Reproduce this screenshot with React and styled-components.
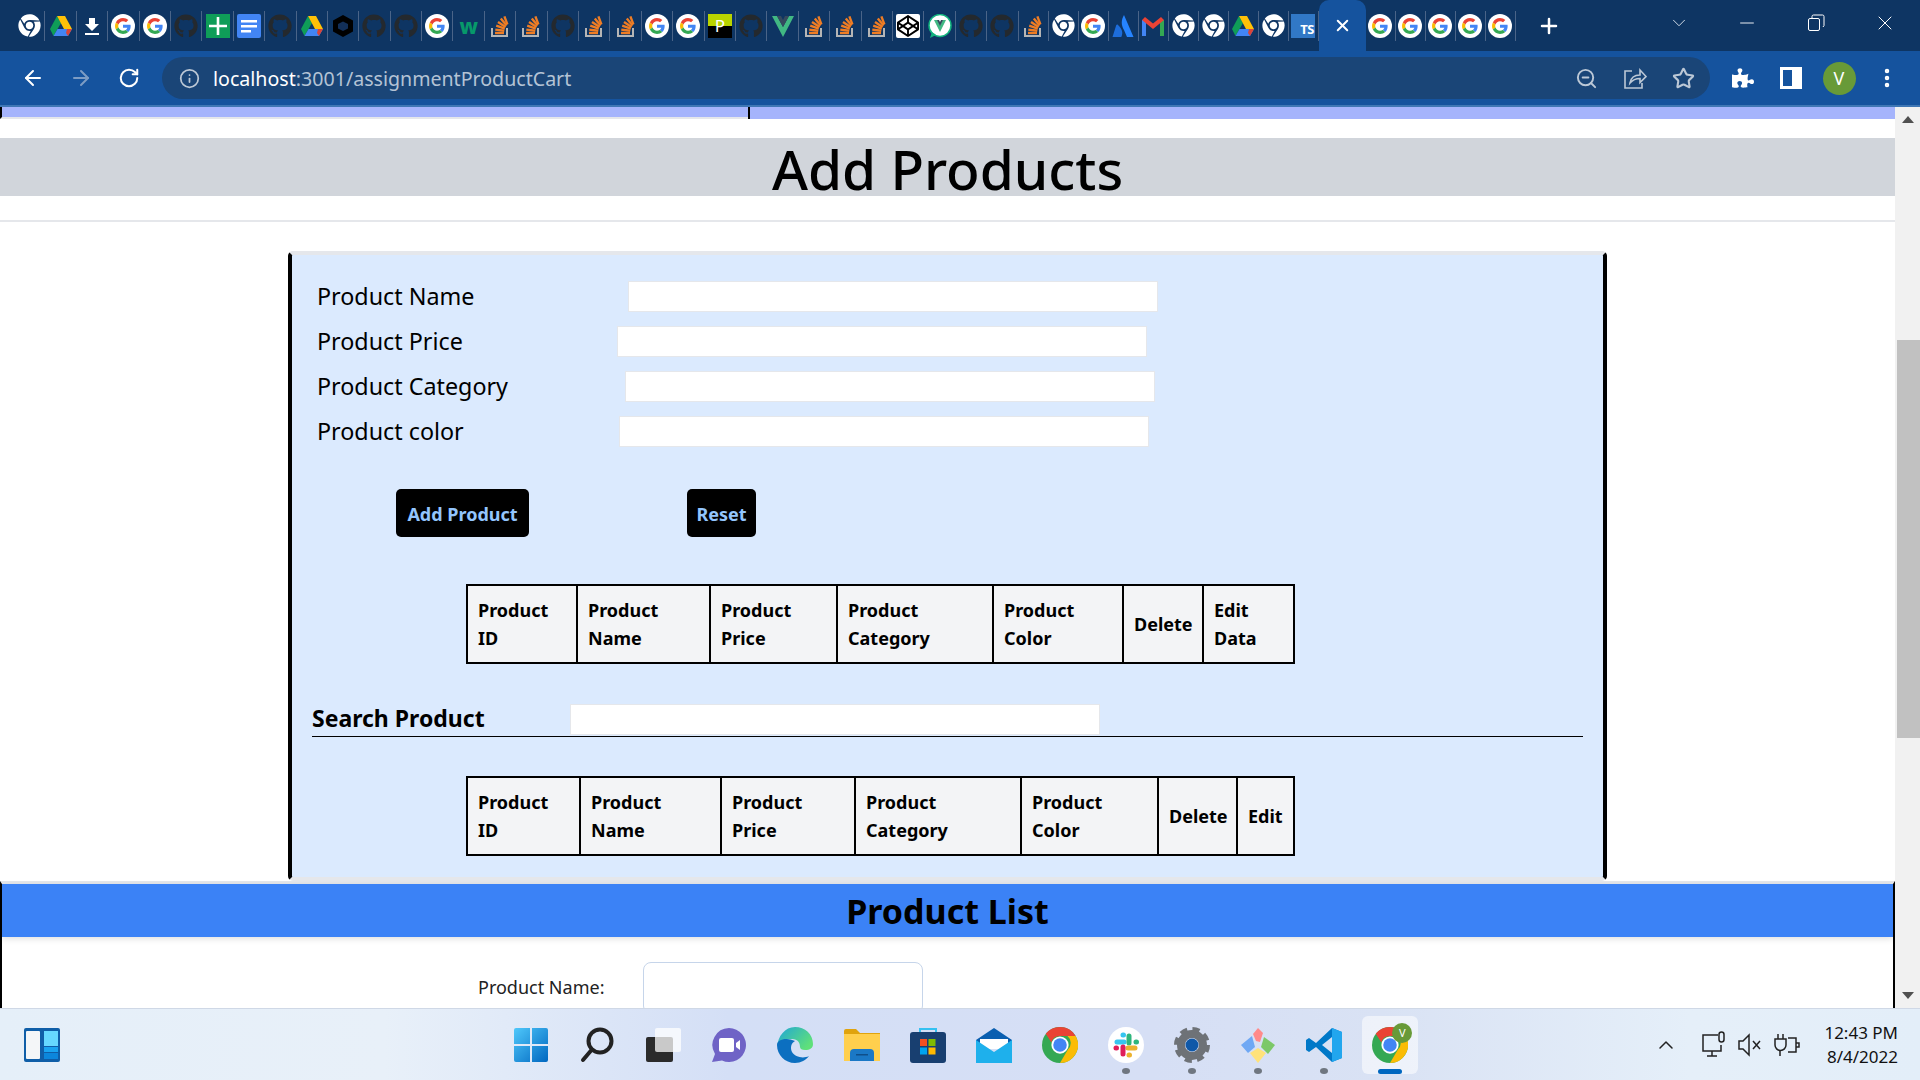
import React from 'react'
import styled, { createGlobalStyle } from 'styled-components'
import { ArrowLeft, ArrowRight, RotateCw, Info, ZoomOut, Star, MoreVertical, Plus, X, ChevronDown, Minus, ChevronUp } from 'lucide-react'
import { FaChrome, FaGithub, FaCodepen, FaPuzzlePiece } from 'react-icons/fa'

const GlobalStyle = createGlobalStyle`
    html, body {
        margin: 0;
        padding: 0;
        overflow: hidden;
    }
    * {
        box-sizing: border-box;
    }
    body {
        font-family: "Noto Sans", "Open Sans", sans-serif;
    }
`

const Screen = styled.div`
    width: 1920px;
    height: 1080px;
    display: flex;
    flex-direction: column;
    overflow: hidden;
    background: #fff;
`

const TabStrip = styled.div`
    height: 51px;
    background: #0e3563;
    display: flex;
    align-items: flex-start;
    padding-left: 14px;
    flex-shrink: 0;
`

const TabGroup = styled.div`
    display: flex;
    height: 51px;
    align-items: center;
`

const MiniTab = styled.div`
    width: ${(p) => p.$width}px;
    height: 30px;
    display: flex;
    align-items: center;
    justify-content: center;
    border-right: 1px solid #4a6488;
`

const ActiveTab = styled.div`
    width: 47px;
    height: 51px;
    background: #15539e;
    border-radius: 10px 10px 0 0;
    display: flex;
    align-items: center;
    justify-content: center;
`

const NewTab = styled.div`
    width: 24px;
    margin-left: 21px;
    height: 51px;
    display: flex;
    align-items: center;
    justify-content: center;
`

const WindowControls = styled.div`
    margin-left: auto;
    height: 46px;
    padding-right: 1px;
    display: flex;
    align-items: center;
`

const ControlSlot = styled.div`
    width: 68.7px;
    display: flex;
    justify-content: center;
`

const Toolbar = styled.div`
    height: 54px;
    background: #15539e;
    display: flex;
    align-items: center;
    padding-left: 9px;
    flex-shrink: 0;
`

const ToolbarEdge = styled.div`
    height: 2px;
    background: #3f77b5;
    flex-shrink: 0;
`

const NavButton = styled.div`
    width: 48px;
    display: flex;
    justify-content: center;
`

const Omnibox = styled.div`
    margin-left: 9px;
    width: 1548px;
    height: 42px;
    border-radius: 21px;
    background: #1a4577;
    display: flex;
    align-items: center;
    padding: 0 15px 0 17px;
`

const UrlText = styled.div`
    margin-left: 13px;
    color: #b4c3d5;
    font-size: 19.6px;
    white-space: nowrap;
`

const UrlHost = styled.span`
    color: #fff;
`

const OmniActions = styled.div`
    margin-left: auto;
    width: 120px;
    display: flex;
    align-items: center;
    justify-content: space-between;
`

const ToolbarRight = styled.div`
    margin-left: 9px;
    display: flex;
    align-items: center;
`

const Avatar = styled.div`
    width: 33px;
    height: 33px;
    border-radius: 50%;
    background: #689a38;
    color: #fff;
    font-size: 18px;
    display: flex;
    align-items: center;
    justify-content: center;
`

const Viewport = styled.div`
    flex: 1;
    min-height: 0;
    display: flex;
    overflow: hidden;
`

const Page = styled.div`
    width: 1895px;
    overflow: hidden;
    background: #fff;
`

const TopStrip = styled.div`
    display: flex;
    height: 12px;
`

const StripLeft = styled.div`
    width: 748px;
    height: 12px;
    background: #a5b4fc;
    border-left: 2px solid #000;
    border-bottom: 2px solid #e5e7eb;
`

const StripRight = styled.div`
    flex: 1;
    background: #a5b4fc;
    border-left: 2px solid #000;
`

const PageTitle = styled.h1`
    margin: 19px 0 0;
    height: 58px;
    background: #d1d5db;
    color: #000;
    text-align: center;
    font-size: 55px;
    font-weight: 500;
    line-height: 62px;
`

const Divider = styled.div`
    margin-top: 24px;
    height: 2px;
    background: #e5e7eb;
`

const Panel = styled.div`
    margin: 29px 0 0 288px;
    width: 1319px;
    height: 630px;
    background: #dbeafe;
    border-style: solid;
    border-width: 4px;
    border-color: #e5e7eb #000;
    border-radius: 5px;
    padding-top: 26px;
`

const FormRow = styled.div`
    display: flex;
    align-items: center;
    height: 31px;
    margin: 0 0 14px 25px;
`

const FormLabel = styled.label`
    width: ${(p) => p.$width}px;
    padding-bottom: 2px;
    font-size: 23.3px;
    color: #000;
    white-space: nowrap;
`

const TextInput = styled.input`
    width: 530px;
    height: 31px;
    background: #fff;
    border: 1px solid #e5e7eb;
    border-radius: 0;
    padding: 0;
    outline: none;
`

const ButtonRow = styled.div`
    display: flex;
    gap: 158px;
    margin: 42px 0 0 104px;
`

const ActionButton = styled.button`
    width: ${(p) => p.$width}px;
    height: 48px;
    background: #000;
    color: #93c5fd;
    border: none;
    border-radius: 5px;
    padding: 2px 0 0;
    font-family: inherit;
    font-size: 18px;
    font-weight: 700;
`

const TableWrap = styled.div`
    margin: ${(p) => p.$top}px 0 0 174px;
`

const DataTable = styled.table`
    width: 827px;
    height: 80px;
    table-layout: fixed;
    border-collapse: collapse;
    border: 2px solid #000;
`

const HeadCell = styled.th`
    background: #f3f4f6;
    border: 2px solid #000;
    padding: 0 0 0 10px;
    text-align: left;
    font-size: 18px;
    font-weight: 700;
    line-height: 28px;
    color: #000;
`

const CellLine = styled.div`
    white-space: nowrap;
`

const SearchRow = styled.div`
    display: flex;
    align-items: center;
    width: 1271px;
    height: 33px;
    margin: 40px 0 0 20px;
    padding-bottom: 2px;
    border-bottom: 1px solid #000;
`

const SearchLabel = styled.div`
    width: 258px;
    padding-bottom: 2px;
    font-size: 23px;
    font-weight: 700;
    color: #000;
`

const ListSection = styled.div`
    border-style: solid;
    border-width: 3px 2px 0;
    border-color: #e5e7eb #000;
    height: 140px;
`

const ListTitle = styled.h2`
    margin: 0;
    height: 53px;
    background: #3b82f6;
    color: #000;
    font-size: 34px;
    font-weight: 700;
    line-height: 54px;
    text-align: center;
    box-shadow: 0 2px 6px rgba(0, 0, 0, 0.12);
`

const ListRow = styled.div`
    display: flex;
    align-items: center;
    margin: 25px 0 0 476px;
`

const ListLabel = styled.label`
    width: 165px;
    padding-bottom: 3px;
    font-size: 18px;
    color: #222;
`

const ListInput = styled.input`
    width: 280px;
    height: 52px;
    background: #fff;
    border: 1px solid #c6d5ea;
    border-radius: 8px;
    outline: none;
`

const Scrollbar = styled.div`
    width: 25px;
    background: #f1f1f1;
    display: flex;
    flex-direction: column;
    align-items: flex-end;
`

const ScrollArrow = styled.div`
    width: 25px;
    height: 25px;
    flex-shrink: 0;
    margin-top: ${(p) => (p.$up ? '0' : 'auto')};
    display: flex;
    align-items: center;
    justify-content: center;

    &:before {
        content: "";
        border-left: 6px solid transparent;
        border-right: 6px solid transparent;
        border-bottom: ${(p) => (p.$up ? '7px solid #505050' : '0')};
        border-top: ${(p) => (p.$up ? '0' : '7px solid #505050')};
    }
`

const ScrollThumb = styled.div`
    width: 23px;
    height: 398px;
    margin-top: 208px;
    background: #c1c1c1;
`

const Taskbar = styled.div`
    height: 72px;
    flex-shrink: 0;
    display: flex;
    align-items: center;
    background: linear-gradient(90deg, #e5eff9 0%, #e8f0f9 20%, #d4dff6 38%, #d6dff5 60%, #d9e2f4 72%, #e5eff9 88%, #e3eef9 100%);
    border-top: 1px solid #cfd8e6;
`

const WidgetButton = styled.div`
    width: 36px;
    height: 34px;
    margin-left: 24px;
`

const AppGroup = styled.div`
    display: flex;
    align-items: center;
    margin-left: 438px;
`

const AppSlot = styled.div`
    position: relative;
    width: 66.1px;
    height: 58px;
    display: flex;
    align-items: center;
    justify-content: center;
    ${(p) => p.$active && `
        background: rgba(255, 255, 255, 0.55);
        border-radius: 6px;
        width: 56px;
        margin-left: 5px;
    `}
`

const OpenDot = styled.span`
    position: absolute;
    left: 50%;
    bottom: 0;
    width: 8px;
    height: 6px;
    margin-left: -4px;
    border-radius: 50%;
    background: #6f7680;
`

const ActiveBar = styled.span`
    position: absolute;
    left: 16px;
    bottom: 0;
    width: 24px;
    height: 5px;
    border-radius: 3px;
    background: #0067c0;
`

const ChromeBadgeWrap = styled.span`
    position: relative;
    display: block;
    width: 36px;
    height: 36px;
`

const ChromeBadge = styled.span`
    position: absolute;
    top: -4px;
    right: -4px;
    width: 20px;
    height: 20px;
    border-radius: 50%;
    background: #689a38;
    color: #fff;
    font-size: 11px;
    display: flex;
    align-items: center;
    justify-content: center;
`

const Tray = styled.div`
    margin-left: auto;
    display: flex;
    align-items: center;
    padding-right: 22px;
    color: #111;
`

const TraySlot = styled.div`
    width: ${(p) => p.$width}px;
    display: flex;
    justify-content: center;
`

const Clock = styled.div`
    margin-left: 20px;
    display: flex;
    flex-direction: column;
    align-items: flex-end;
    font-size: 17px;
    line-height: 24px;
    color: #111;
`

const TabIcon = styled.span`
    display: flex;
    align-items: center;
    justify-content: center;
    width: 24px;
    height: 24px;
    flex-shrink: 0;
`

const TsIcon = styled(TabIcon)`
    background: #3178c6;
    color: #fff;
    font: 700 13px "Noto Sans", sans-serif;
    align-items: flex-end;
    justify-content: flex-end;
    letter-spacing: -0.5px;
    padding-right: 1px;
`

const PrezIcon = styled(TabIcon)`
    background: linear-gradient(#b9d300 48%, #000 48%);
    color: #fff;
    font: 400 17px "Noto Sans", sans-serif;
`

const W3Icon = styled(TabIcon)`
    color: #07996a;
    font: 800 21px "Noto Sans", sans-serif;
    line-height: 24px;
`

const CodepenIcon = styled(TabIcon)`
    background: #fff;
    border-radius: 2px;
`

const GoogleG = () => (
    <svg width="24" height="24" viewBox="0 0 24 24">
        <circle cx="12" cy="12" r="12" fill="#fff" />
        <g transform="translate(4 4) scale(0.333)">
            <path fill="#EA4335" d="M24 9.5c3.54 0 6.71 1.22 9.21 3.6l6.85-6.85C35.9 2.38 30.47 0 24 0 14.62 0 6.51 5.38 2.56 13.22l7.98 6.19C12.43 13.72 17.74 9.5 24 9.5z" />
            <path fill="#4285F4" d="M46.98 24.55c0-1.57-.15-3.09-.38-4.55H24v9.02h12.94c-.58 2.96-2.26 5.48-4.78 7.18l7.73 6c4.51-4.18 7.09-10.36 7.09-17.65z" />
            <path fill="#FBBC05" d="M10.53 28.59c-.48-1.45-.76-2.99-.76-4.59s.27-3.14.76-4.59l-7.98-6.19C.92 16.46 0 20.12 0 24c0 3.88.92 7.54 2.56 10.78l7.97-6.19z" />
            <path fill="#34A853" d="M24 48c6.48 0 11.93-2.13 15.89-5.81l-7.73-6c-2.15 1.45-4.92 2.3-8.16 2.3-6.26 0-11.57-4.22-13.47-9.91l-7.98 6.19C6.51 42.62 14.62 48 24 48z" />
        </g>
    </svg>
)

const DriveIcon = () => (
    <svg width="24" height="22" viewBox="0 0 24 22">
        <path fill="#0F9D58" d="M8 1 1 14l3.5 7L12 8z" />
        <path fill="#FFC107" d="M8 1h8l7 13h-8z" />
        <path fill="#4285F4" d="M4.5 21 8.5 14H23l-4 7z" />
        <path fill="#DB4437" d="M19 21l4-7h-5l-1 4z" />
    </svg>
)

const StackIcon = () => (
    <svg width="22" height="24" viewBox="0 0 22 24">
        <path d="M3 14v8h15v-8" fill="none" stroke="#b5b5b5" strokeWidth="2" />
        <g stroke="#ef7d24" strokeWidth="2.4">
            <path d="M6 19h9" />
            <path d="M6.3 15.6l9 1.2" />
            <path d="M7.2 11.6l8.6 3" />
            <path d="M9 8l7.6 5" />
            <path d="M11.8 4.6l5.8 7" />
            <path d="M15.4 2.4l3 8" />
        </g>
    </svg>
)

const VueIcon = () => (
    <svg width="24" height="24" viewBox="0 0 24 24">
        <path fill="#41b883" d="M1 2h5l6 11 6-11h5L12 23z" />
        <path fill="#35495e" d="M6 2h4l2 4 2-4h4l-6 11z" />
    </svg>
)

const ChromeColor = () => (
    <svg width="36" height="36" viewBox="0 0 48 48">
        <circle cx="24" cy="24" r="24" fill="#34a853" />
        <path fill="#ea4335" d="M24 0a24 24 0 0 1 20.8 12H24a12 12 0 0 0-11.5 8.5L5 9A24 24 0 0 1 24 0z" />
        <path fill="#fbbc05" d="M44.8 12A24 24 0 0 1 24 48l10.5-18a12 12 0 0 0-.5-18z" />
        <circle cx="24" cy="24" r="11.5" fill="#fff" />
        <circle cx="24" cy="24" r="9" fill="#4285f4" />
    </svg>
)

const favicons = {
    chrome: <FaChrome size={23} color="#fff" />,
    drive: <DriveIcon />,
    download: (
        <svg width="20" height="24" viewBox="0 0 20 24">
            <path fill="#fff" d="M7 4h6v6h4l-7 7-7-7h4zM3 19h14v2H3z" />
        </svg>
    ),
    google: <GoogleG />,
    github: <FaGithub size={24} color="#24292e" />,
    sheets: (
        <svg width="24" height="24" viewBox="0 0 24 24">
            <rect width="24" height="24" fill="#0f9d58" />
            <path fill="#fff" d="M10.7 3h2.6v7.7H21v2.6h-7.7V21h-2.6v-7.7H3v-2.6h7.7z" />
        </svg>
    ),
    docs: (
        <svg width="24" height="24" viewBox="0 0 24 24">
            <rect width="24" height="24" rx="2" fill="#4285f4" />
            <path fill="#fff" d="M4 6h16v2.6H4zM4 11h16v2.4H4zM4 16h10v2.4H4z" />
        </svg>
    ),
    hex: (
        <svg width="24" height="24" viewBox="0 0 24 24">
            <path fill="#000" d="M12 1l10 5.5v11L12 23 2 17.5v-11z" />
            <path fill="#122f58" d="M12 7.5l5 2.5v4.5l-5 2.5-5-2.5V10z" />
        </svg>
    ),
    w3: <W3Icon>w</W3Icon>,
    stack: <StackIcon />,
    prez: <PrezIcon>P</PrezIcon>,
    vue: <VueIcon />,
    codepen: (
        <CodepenIcon>
            <FaCodepen size={22} color="#000" />
        </CodepenIcon>
    ),
    vuechat: (
        <svg width="24" height="24" viewBox="0 0 24 24">
            <circle cx="12" cy="11.5" r="11" fill="#fff" stroke="#12b37e" strokeWidth="1.5" />
            <path fill="#12b37e" d="M2 24l2-6 4 3z" />
            <path fill="#41b883" d="M6 6h3.5L12 11l2.5-5H18l-6 12z" />
            <path fill="#35495e" d="M9 6h2l1 2 1-2h2l-3 6z" />
        </svg>
    ),
    atlassian: (
        <svg width="24" height="24" viewBox="0 0 24 24">
            <path fill="#2684ff" d="M13 1c-3 5-3 10 0 15l3 7h6.5z" />
            <path fill="#1d6ddb" d="M7 11c-.6-.8-1.4-.6-1.8.2L1.5 23h8.8c2-3.8 1-8-3.3-12z" />
        </svg>
    ),
    gmail: (
        <svg width="24" height="20" viewBox="0 0 24 20">
            <path fill="#4285f4" d="M1 4h4v16H1z" />
            <path fill="#34a853" d="M19 4h4v16h-4z" />
            <path fill="#ea4335" d="M1 4l3-3 8 6.5L20 1l3 3-11 9z" />
        </svg>
    ),
    ts: <TsIcon>TS</TsIcon>,
}

const firstTabs = ['chrome', 'drive', 'download', 'google', 'google', 'github', 'sheets', 'docs', 'github', 'drive', 'hex', 'github', 'github', 'google', 'w3', 'stack', 'stack', 'github', 'stack', 'stack', 'google', 'google', 'prez', 'github', 'vue', 'stack', 'stack', 'stack', 'codepen', 'vuechat', 'github', 'github']
const secondTabs = ['stack', 'chrome', 'google', 'atlassian', 'gmail', 'chrome', 'chrome', 'drive', 'chrome', 'ts']
const lastTabs = ['google', 'google', 'google', 'google', 'google']

const topColumns = [
    { title: ['Product', 'ID'], width: 110 },
    { title: ['Product', 'Name'], width: 133 },
    { title: ['Product', 'Price'], width: 127 },
    { title: ['Product', 'Category'], width: 156 },
    { title: ['Product', 'Color'], width: 130 },
    { title: ['Delete'], width: 80 },
    { title: ['Edit', 'Data'], width: 91 },
]

const bottomColumns = [
    { title: ['Product', 'ID'], width: 113 },
    { title: ['Product', 'Name'], width: 141 },
    { title: ['Product', 'Price'], width: 134 },
    { title: ['Product', 'Category'], width: 166 },
    { title: ['Product', 'Color'], width: 137 },
    { title: ['Delete'], width: 79 },
    { title: ['Edit'], width: 57 },
]

const formRows = [
    { label: 'Product Name', left: 311 },
    { label: 'Product Price', left: 300 },
    { label: 'Product Category', left: 308 },
    { label: 'Product color', left: 302 },
]

const taskbarApps = [
    {
        name: 'start',
        icon: (
            <svg width="36" height="36" viewBox="0 0 36 36">
                <defs>
                    <linearGradient id="winGrad" x1="0" y1="0" x2="1" y2="1">
                        <stop offset="0" stopColor="#4fc8fb" />
                        <stop offset="1" stopColor="#0067c0" />
                    </linearGradient>
                </defs>
                <path fill="url(#winGrad)" d="M1 3a2 2 0 0 1 2-2h14v16H1zM19 1h14a2 2 0 0 1 2 2v14H19zM1 19h16v16H3a2 2 0 0 1-2-2zM19 19h16v14a2 2 0 0 1-2 2H19z" />
            </svg>
        ),
    },
    {
        name: 'search',
        icon: (
            <svg width="36" height="36" viewBox="0 0 36 36" fill="none" stroke="#222" strokeWidth="4" strokeLinecap="round">
                <circle cx="21" cy="14" r="11.5" />
                <path d="M12.5 23 4 33" />
            </svg>
        ),
    },
    {
        name: 'tasks',
        icon: (
            <svg width="36" height="36" viewBox="0 0 36 36">
                <rect x="1" y="10" width="27" height="25" rx="2" fill="#2b2b2b" />
                <rect x="10" y="1" width="26" height="24" rx="2" fill="#fff" fillOpacity="0.75" />
            </svg>
        ),
    },
    {
        name: 'chat',
        icon: (
            <svg width="36" height="36" viewBox="0 0 36 36">
                <path fill="#6f63c6" d="M18 1a17 17 0 1 1-7 32.5L1 35l3-8A17 17 0 0 1 18 1z" />
                <rect x="8" y="11" width="15" height="14" rx="2" fill="#fff" />
                <path fill="#fff" d="M25 16l4-3v10l-4-3z" />
            </svg>
        ),
    },
    {
        name: 'edge',
        icon: (
            <svg width="36" height="36" viewBox="0 0 36 36">
                <defs>
                    <linearGradient id="edgeGrad" x1="0" y1="0" x2="1" y2="0.6">
                        <stop offset="0" stopColor="#1fa5d8" />
                        <stop offset="1" stopColor="#5fe07a" />
                    </linearGradient>
                </defs>
                <path fill="url(#edgeGrad)" d="M18 0c10 0 18 7 18 17 0 4-3 6-8 6-3 0-5-1-5-3 0-4-2-8-8-8-6 0-14 2-15 8C1 9 8 0 18 0z" />
                <path fill="#0c6fc0" d="M0 18C0 28 8 36 18 36c6 0 11-3 14-7-6 3-14 1-17-4-2-4-1-9 3-11C10 10 0 12 0 18z" />
            </svg>
        ),
    },
    {
        name: 'files',
        icon: (
            <svg width="36" height="32" viewBox="0 0 36 32">
                <path fill="#e0a30d" d="M0 2a2 2 0 0 1 2-2h10l4 4h20v6H0z" />
                <path fill="#ffcf4d" d="M0 5h36v27H0z" />
                <path fill="#1a78c6" d="M6 32v-8a4 4 0 0 1 4-4h16a4 4 0 0 1 4 4v8z" />
                <path fill="#0f4f8a" d="M12 25h12v1.5H12z" />
            </svg>
        ),
    },
    {
        name: 'store',
        icon: (
            <svg width="36" height="36" viewBox="0 0 36 36">
                <path d="M10 7V2h16v5" fill="none" stroke="#35c1f1" strokeWidth="2" />
                <rect y="5" width="36" height="31" rx="3" fill="#183f70" />
                <rect x="10" y="12" width="7" height="7" fill="#f25022" />
                <rect x="18.5" y="12" width="7" height="7" fill="#7fba00" />
                <rect x="10" y="20.5" width="7" height="7" fill="#00a4ef" />
                <rect x="18.5" y="20.5" width="7" height="7" fill="#ffb900" />
            </svg>
        ),
    },
    {
        name: 'mail',
        icon: (
            <svg width="36" height="36" viewBox="0 0 36 36">
                <path fill="#0a5fb0" d="M0 13 18 1l18 12v4H0z" />
                <path fill="#fff" d="M4 12h28v10H4z" />
                <path fill="#1eb0ec" d="M0 13l18 12 18-12v23H0z" />
            </svg>
        ),
    },
    { name: 'chrome', icon: <ChromeColor /> },
    {
        name: 'slack',
        open: true,
        icon: (
            <svg width="36" height="36" viewBox="0 0 36 36" strokeWidth="5" strokeLinecap="round" fill="none">
                <circle cx="18" cy="18" r="18" fill="#fff" />
                <path stroke="#36c5f0" d="M9 15h7M15 8h.5" />
                <path stroke="#2eb67d" d="M21 9v7M28 15h.5" />
                <path stroke="#ecb22e" d="M20 21h7M21 28h.5" />
                <path stroke="#e01e5a" d="M15 20v7M8 21h.5" />
            </svg>
        ),
    },
    {
        name: 'settings',
        open: true,
        icon: (
            <svg width="36" height="36" viewBox="0 0 36 36">
                <circle cx="18" cy="18" r="11" fill="none" stroke="#6e7277" strokeWidth="8" />
                <circle cx="18" cy="18" r="15.5" fill="none" stroke="#6e7277" strokeWidth="5" strokeDasharray="7 5.17" />
                <circle cx="18" cy="18" r="6.5" fill="#0f58a8" />
            </svg>
        ),
    },
    {
        name: 'kraken',
        open: true,
        icon: (
            <svg width="36" height="36" viewBox="0 0 36 36">
                <path fill="#ff8a8a" d="M18 1l5 5-3 9-4-1-3-7z" />
                <path fill="#7cc868" d="M24 10l11 8-7 9-7-7z" />
                <path fill="#6fa8f4" d="M12 9l-11 9 7 8 7-6z" />
                <path fill="#ffe27a" d="M10 26l8-5 8 5-8 10z" />
            </svg>
        ),
    },
    {
        name: 'vscode',
        open: true,
        icon: (
            <svg width="36" height="36" viewBox="0 0 36 36">
                <path fill="#0078c8" d="M26 1 10 16 3 11 0 13v10l3 2 7-5 16 15 10-4V5zM26 10v16l-10-8z" fillRule="evenodd" />
                <path fill="#22a6ee" d="M26 1l10 4v26l-10 4z" />
            </svg>
        ),
    },
    {
        name: 'chrome-active',
        active: true,
        icon: (
            <ChromeBadgeWrap>
                <ChromeColor />
                <ChromeBadge>V</ChromeBadge>
            </ChromeBadgeWrap>
        ),
    },
]

const ProductTable = ({ columns }) => (
    <DataTable>
        <colgroup>
            {columns.map((c) => (
                <col key={c.title.join()} style={{ width: c.width }} />
            ))}
        </colgroup>
        <thead>
            <tr>
                {columns.map((c) => (
                    <HeadCell key={c.title.join()}>
                        {c.title.map((line) => (
                            <CellLine key={line}>{line}</CellLine>
                        ))}
                    </HeadCell>
                ))}
            </tr>
        </thead>
    </DataTable>
)

export default function App() {
    return (
        <>
            <GlobalStyle />
            <Screen>
                <TabStrip>
                    <TabGroup>
                        {firstTabs.map((t, i) => (
                            <MiniTab key={i} $width={31.4}>{favicons[t]}</MiniTab>
                        ))}
                        {secondTabs.map((t, i) => (
                            <MiniTab key={i} $width={30}>{favicons[t]}</MiniTab>
                        ))}
                    </TabGroup>
                    <ActiveTab>
                        <X size={19} color="#fff" strokeWidth={2.5} />
                    </ActiveTab>
                    <TabGroup>
                        {lastTabs.map((t, i) => (
                            <MiniTab key={i} $width={30}>{favicons[t]}</MiniTab>
                        ))}
                    </TabGroup>
                    <NewTab>
                        <Plus size={24} color="#fff" strokeWidth={2.5} />
                    </NewTab>
                    <WindowControls>
                        <ControlSlot><ChevronDown size={22} color="#dfe7f0" strokeWidth={1} /></ControlSlot>
                        <ControlSlot><Minus size={22} color="#fff" strokeWidth={1} /></ControlSlot>
                        <ControlSlot>
                            <svg width="18" height="18" viewBox="0 0 18 18" fill="none" stroke="#fff">
                                <rect x="1.5" y="4.5" width="11" height="12" rx="1.5" />
                                <path d="M5 4V2.5A1.5 1.5 0 0 1 6.5 1h9A1.5 1.5 0 0 1 17 2.5v9l-1 1.5" />
                            </svg>
                        </ControlSlot>
                        <ControlSlot><X size={24} color="#fff" strokeWidth={1} /></ControlSlot>
                    </WindowControls>
                </TabStrip>
                <Toolbar>
                    <NavButton><ArrowLeft size={24} color="#fff" /></NavButton>
                    <NavButton><ArrowRight size={24} color="#7d9cc4" /></NavButton>
                    <NavButton><RotateCw size={22} color="#fff" strokeWidth={2.2} /></NavButton>
                    <Omnibox>
                        <Info size={21} color="#bcc8d6" />
                        <UrlText>
                            <UrlHost>localhost</UrlHost>:3001/assignmentProductCart
                        </UrlText>
                        <OmniActions>
                            <ZoomOut size={23} color="#bcc8d6" />
                            <svg width="24" height="24" viewBox="0 0 24 24" fill="none" stroke="#bcc8d6" strokeWidth="1.6">
                                <path d="M9 5H2v17h17v-5" />
                                <path d="M7 17c1-6 5-8 10-8V4l6 6.5-6 6v-4c-4 0-7 1-10 4.5z" />
                            </svg>
                            <Star size={23} color="#bcc8d6" strokeWidth={2.2} />
                        </OmniActions>
                    </Omnibox>
                    <ToolbarRight>
                        <NavButton><FaPuzzlePiece size={22} color="#fff" /></NavButton>
                        <NavButton>
                            <svg width="22" height="22" viewBox="0 0 22 22">
                                <path fill="#fff" fillRule="evenodd" d="M0 0h22v22H0zM3 3v16h9V3z" />
                            </svg>
                        </NavButton>
                        <NavButton><Avatar>V</Avatar></NavButton>
                        <NavButton><MoreVertical size={24} color="#fff" strokeWidth={2.5} /></NavButton>
                    </ToolbarRight>
                </Toolbar>
                <ToolbarEdge />
                <Viewport>
                    <Page>
                        <TopStrip>
                            <StripLeft />
                            <StripRight />
                        </TopStrip>
                        <PageTitle>Add Products</PageTitle>
                        <Divider />
                        <Panel>
                            {formRows.map((r) => (
                                <FormRow key={r.label}>
                                    <FormLabel $width={r.left}>{r.label}</FormLabel>
                                    <TextInput />
                                </FormRow>
                            ))}
                            <ButtonRow>
                                <ActionButton $width={133}>Add Product</ActionButton>
                                <ActionButton $width={69}>Reset</ActionButton>
                            </ButtonRow>
                            <TableWrap $top={47}>
                                <ProductTable columns={topColumns} />
                            </TableWrap>
                            <SearchRow>
                                <SearchLabel>Search Product</SearchLabel>
                                <TextInput />
                            </SearchRow>
                            <TableWrap $top={39}>
                                <ProductTable columns={bottomColumns} />
                            </TableWrap>
                        </Panel>
                        <ListSection>
                            <ListTitle>Product List</ListTitle>
                            <ListRow>
                                <ListLabel>Product Name:</ListLabel>
                                <ListInput />
                            </ListRow>
                        </ListSection>
                    </Page>
                    <Scrollbar>
                        <ScrollArrow $up />
                        <ScrollThumb />
                        <ScrollArrow />
                    </Scrollbar>
                </Viewport>
                <Taskbar>
                    <WidgetButton>
                        <svg width="36" height="34" viewBox="0 0 36 34">
                            <rect width="36" height="34" rx="2" fill="#0f5ea8" />
                            <rect x="2" y="3" width="14" height="28" rx="1" fill="#f4f6f8" />
                            <rect x="20" y="3" width="14" height="15" fill="#66d8ff" />
                            <rect x="20" y="19" width="14" height="5" fill="#1aa3f0" />
                            <rect x="20" y="25" width="14" height="6" fill="#0c86dc" />
                        </svg>
                    </WidgetButton>
                    <AppGroup>
                        {taskbarApps.map((a) => (
                            <AppSlot key={a.name} $active={a.active}>
                                {a.icon}
                                {a.open && <OpenDot />}
                                {a.active && <ActiveBar />}
                            </AppSlot>
                        ))}
                    </AppGroup>
                    <Tray>
                        <TraySlot $width={60}><ChevronUp size={24} color="#222" strokeWidth={1.5} /></TraySlot>
                        <TraySlot $width={36}>
                            <svg width="26" height="28" viewBox="0 0 26 28" fill="none" stroke="#222" strokeWidth="1.5">
                                <path d="M17 4H2v16h18v-6" />
                                <path d="M11 20v5M6 25h10" />
                                <rect x="18" y="1" width="5" height="10" rx="2.5" />
                            </svg>
                        </TraySlot>
                        <TraySlot $width={36}>
                            <svg width="26" height="24" viewBox="0 0 26 24" fill="none" stroke="#222" strokeWidth="1.5">
                                <path d="M2 8h4l6-6v20l-6-6H2z" />
                                <path d="M16 8l7 8M23 8l-7 8" />
                            </svg>
                        </TraySlot>
                        <TraySlot $width={36}>
                            <svg width="28" height="24" viewBox="0 0 28 24" fill="none" stroke="#222" strokeWidth="1.5">
                                <path d="M6 1v5M11 1v5M3 6h11v6a5 5 0 0 1-11 0zM8 17v6" />
                                <path d="M16 5h8v14h-8M24 10h3v4h-3" />
                            </svg>
                        </TraySlot>
                        <Clock>
                            <span>12:43 PM</span>
                            <span>8/4/2022</span>
                        </Clock>
                    </Tray>
                </Taskbar>
            </Screen>
        </>
    )
}
